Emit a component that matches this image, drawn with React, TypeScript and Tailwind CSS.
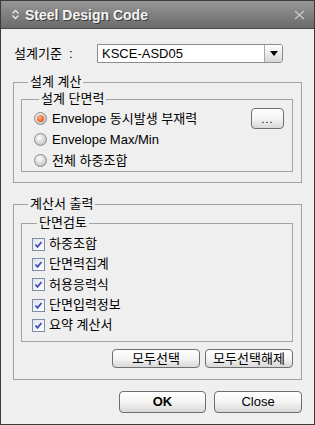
import React from 'react';

const font = { fontFamily: '"Liberation Sans", "Noto Sans CJK KR", sans-serif' };

function Radio({ checked, label }: { checked?: boolean; label: string }) {
  return (
    <div className="flex h-[21px] items-center gap-[5px]">
      <span className="flex h-[13px] w-[13px] items-center justify-center rounded-full border border-[#8a8a8a] bg-[radial-gradient(circle_at_40%_35%,#ffffff,#c8c8c8_70%,#a8a8a8)]">
        {checked && (
          <span className="h-[7px] w-[7px] rounded-full bg-[radial-gradient(circle_at_40%_35%,#ffb27a,#f05a1e_70%,#c83c10)]" />
        )}
      </span>
      <span>{label}</span>
    </div>
  );
}

function Check({ label }: { label: string }) {
  return (
    <div className="flex h-[20.3px] items-center gap-[4px]">
      <span className="flex h-[13px] w-[13px] items-center justify-center border border-[#7d8cab] bg-gradient-to-br from-[#dfe3ea] to-[#ffffff]">
        <svg width="9" height="9" viewBox="0 0 9 9">
          <path d="M1.5 4.5 L3.5 6.8 L7.5 2" fill="none" stroke="#3b4fc0" strokeWidth="1.8" />
        </svg>
      </span>
      <span>{label}</span>
    </div>
  );
}

function Btn({ children, className = '' }: { children: React.ReactNode; className?: string }) {
  return (
    <button
      className={`flex items-center justify-center rounded-[4px] border border-[#6f6f6f] bg-gradient-to-b from-[#ffffff] via-[#f4f4f4] to-[#d8d8d8] text-black ${className}`}
    >
      {children}
    </button>
  );
}

export default function App() {
  return (
    <div className="flex h-[425px] w-[315px] flex-col border border-[#3a3a3a] text-[13px] leading-[16px] text-black" style={font}>
      <div className="flex h-[28px] items-center border-b border-[#4a4a4a] bg-gradient-to-b from-[#979797] to-[#6b6b6b] pl-[10px] pr-[9px]">
        <svg width="9" height="11" viewBox="0 0 9 11" className="mr-[5px]">
          <path d="M1.5 4.5 L4.5 1.5 L7.5 4.5 M1.5 6.5 L4.5 9.5 L7.5 6.5" fill="none" stroke="#e6e6e6" strokeWidth="1.4" />
        </svg>
        <span className="text-[14px] font-bold text-[#f4f4f4] [text-shadow:1px_1px_0_#3a3a3a]">Steel Design Code</span>
        <span className="flex-1" />
        <svg width="11" height="10" viewBox="0 0 11 10">
          <path d="M1 1 L10 9 M10 1 L1 9" stroke="#c8c8c8" strokeWidth="1.3" />
        </svg>
      </div>

      <div className="flex flex-1 flex-col bg-[#efefef] px-[12px] pt-[15px]">
        <div className="flex h-[19px] items-center pl-px">
          <span className="w-[83px]">설계기준&nbsp;&nbsp;:</span>
          <div className="flex h-[19px] w-[186px] items-stretch rounded-r-[3px] border border-[#8c8c8c] bg-white">
            <span className="flex flex-1 items-center pl-[4px]">KSCE-ASD05</span>
            <span className="flex w-[18px] items-center justify-center rounded-r-[2px] border-l border-[#a8a8a8] bg-gradient-to-b from-[#ffffff] to-[#d6d6d6]">
              <svg width="8" height="5" viewBox="0 0 8 5">
                <path d="M0 0 H8 L4 5 Z" fill="#000" />
              </svg>
            </span>
          </div>
        </div>

        <fieldset className="mt-[11px] border border-[#a3a3a3] pb-[10px] pl-[7px] pr-[8px]">
          <legend className="ml-[7px] px-[2px]">설계 계산</legend>
          <fieldset className="mt-[1px] border border-[#a3a3a3] pl-[12px] pr-[8px]">
            <legend className="ml-[5px] px-[2px]">설계 단면력</legend>
            <div className="mt-[1px] flex items-center justify-between">
              <Radio checked label="Envelope 동시발생 부재력" />
              <Btn className="h-[21px] w-[33px] text-[11px] tracking-[1px]">...</Btn>
            </div>
            <Radio label="Envelope Max/Min" />
            <Radio label="전체 하중조합" />
          </fieldset>
        </fieldset>

        <fieldset className="mt-[13px] border border-[#a3a3a3] pb-[11px] pl-[7px] pr-[8px]">
          <legend className="ml-[7px] px-[2px]">계산서 출력</legend>
          <fieldset className="mt-[3px] border border-[#a3a3a3] pb-[6px] pl-[10px]">
            <legend className="ml-[5px] px-[2px]">단면검토</legend>
            <div className="pt-[3px]">
              <Check label="하중조합" />
              <Check label="단면력집계" />
              <Check label="허용응력식" />
              <Check label="단면입력정보" />
              <Check label="요약 계산서" />
            </div>
          </fieldset>
          <div className="mt-[7px] flex justify-end gap-[5px]">
            <Btn className="h-[19px] w-[88px]">모두선택</Btn>
            <Btn className="h-[19px] w-[88px]">모두선택해제</Btn>
          </div>
        </fieldset>

        <div className="mt-[11px] flex justify-end gap-[8px] pr-[0px]">
          <Btn className="h-[22px] w-[87px] font-bold">OK</Btn>
          <Btn className="h-[22px] w-[88px]">Close</Btn>
        </div>
      </div>
    </div>
  );
}
